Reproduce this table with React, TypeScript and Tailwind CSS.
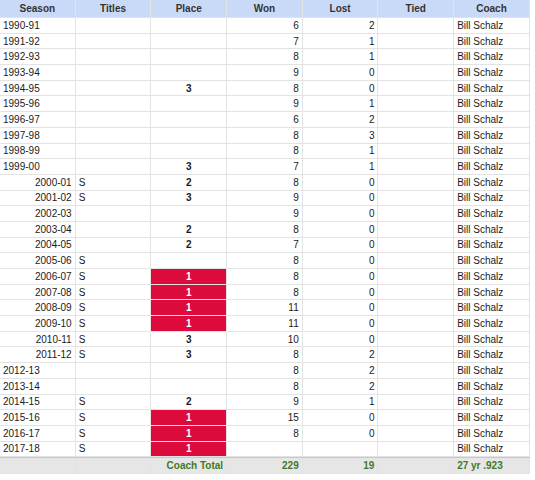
import React from "react";

type Row = {
  season: string;
  indent?: boolean;
  titles?: string;
  place?: string;
  red?: boolean;
  won?: string;
  lost?: string;
};

const rows: Row[] = [
  { season: "1990-91", won: "6", lost: "2" },
  { season: "1991-92", won: "7", lost: "1" },
  { season: "1992-93", won: "8", lost: "1" },
  { season: "1993-94", won: "9", lost: "0" },
  { season: "1994-95", place: "3", won: "8", lost: "0" },
  { season: "1995-96", won: "9", lost: "1" },
  { season: "1996-97", won: "6", lost: "2" },
  { season: "1997-98", won: "8", lost: "3" },
  { season: "1998-99", won: "8", lost: "1" },
  { season: "1999-00", place: "3", won: "7", lost: "1" },
  { season: "2000-01", indent: true, titles: "S", place: "2", won: "8", lost: "0" },
  { season: "2001-02", indent: true, titles: "S", place: "3", won: "9", lost: "0" },
  { season: "2002-03", indent: true, won: "9", lost: "0" },
  { season: "2003-04", indent: true, place: "2", won: "8", lost: "0" },
  { season: "2004-05", indent: true, place: "2", won: "7", lost: "0" },
  { season: "2005-06", indent: true, titles: "S", won: "8", lost: "0" },
  { season: "2006-07", indent: true, titles: "S", place: "1", red: true, won: "8", lost: "0" },
  { season: "2007-08", indent: true, titles: "S", place: "1", red: true, won: "8", lost: "0" },
  { season: "2008-09", indent: true, titles: "S", place: "1", red: true, won: "11", lost: "0" },
  { season: "2009-10", indent: true, titles: "S", place: "1", red: true, won: "11", lost: "0" },
  { season: "2010-11", indent: true, titles: "S", place: "3", won: "10", lost: "0" },
  { season: "2011-12", indent: true, titles: "S", place: "3", won: "8", lost: "2" },
  { season: "2012-13", won: "8", lost: "2" },
  { season: "2013-14", won: "8", lost: "2" },
  { season: "2014-15", titles: "S", place: "2", won: "9", lost: "1" },
  { season: "2015-16", titles: "S", place: "1", red: true, won: "15", lost: "0" },
  { season: "2016-17", titles: "S", place: "1", red: true, won: "8", lost: "0" },
  { season: "2017-18", titles: "S", place: "1", red: true },
];

const cell = "w-[75.7px] shrink-0 border-r border-b border-[#e3e3e3] px-[3px] flex items-center overflow-hidden whitespace-nowrap";

export default function App() {
  return (
    <div className="w-[535px] h-[480px] bg-white" style={{ fontFamily: '"Liberation Sans", Arial, sans-serif' }}>
      <div className="w-[530px] text-[10px] text-[#1a1a1a]">
        <div className="flex h-[18px] bg-[#c9daf8] font-bold text-[#333]">
          {["Season", "Titles", "Place", "Won", "Lost", "Tied", "Coach"].map((h) => (
            <div key={h} className={`${cell} justify-center border-[#b7cbe9]`}>{h}</div>
          ))}
        </div>
        {rows.map((r) => (
          <div key={r.season} className="flex h-[15.7px]">
            <div className={`${cell} ${r.indent ? "justify-end" : "justify-start"}`}>{r.season}</div>
            <div className={`${cell} justify-start`}>{r.titles ?? ""}</div>
            <div
              className={`${cell} justify-center font-bold ${r.red ? "bg-[#dc0b3b] text-white border-[#dc0b3b]" : ""}`}
            >
              {r.place ?? ""}
            </div>
            <div className={`${cell} justify-end`}>{r.won ?? ""}</div>
            <div className={`${cell} justify-end`}>{r.lost ?? ""}</div>
            <div className={`${cell}`}></div>
            <div className={`${cell} justify-start`}>Bill Schalz</div>
          </div>
        ))}
        <div className="flex h-[17px] bg-[#e6e6e6] border-t border-[#c8c8c8] font-bold text-[#3f7a26]">
          <div className={`${cell} border-[#d6d6d6]`}></div>
          <div className={`${cell} border-[#d6d6d6]`}></div>
          <div className={`${cell} justify-end border-[#d6d6d6]`}>Coach Total</div>
          <div className={`${cell} justify-end border-[#d6d6d6]`}>229</div>
          <div className={`${cell} justify-end border-[#d6d6d6]`}>19</div>
          <div className={`${cell} border-[#d6d6d6]`}></div>
          <div className={`${cell} justify-start border-[#d6d6d6]`}>27 yr .923</div>
        </div>
      </div>
    </div>
  );
}
